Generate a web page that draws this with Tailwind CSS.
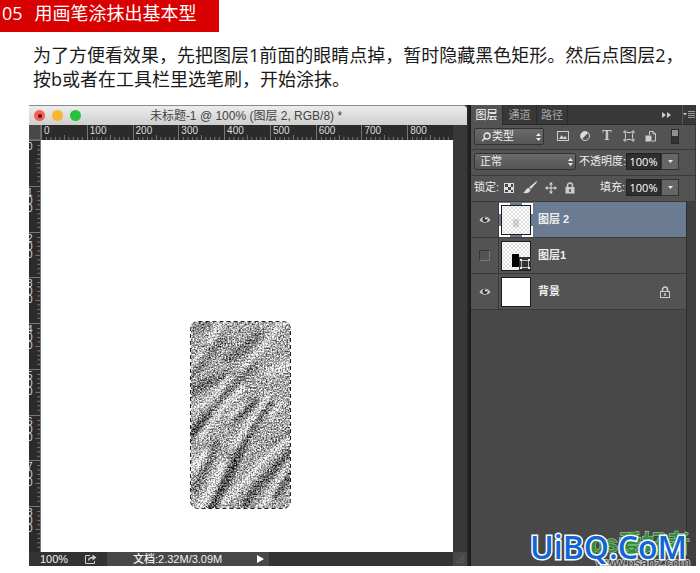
<!DOCTYPE html>
<html lang="zh-CN">

<head>
    <meta charset="UTF-8">
    <meta name="viewport" content="width=device-width, initial-scale=1.0">
    <title>用画笔涂抹出基本型</title>
    <script src="https://cdn.jsdelivr.net/npm/@tailwindcss/browser@4"></script>
</head>

<body class="bg-white text-black font-['Open_Sans','Noto_Sans_CJK_SC',sans-serif]">
    <header class="flex">
        <h1 class="flex gap-3 h-8 w-[219px] pl-[2px] bg-[#d80000] text-white text-[18px] leading-[26px] whitespace-nowrap">
            <span>05</span><span>用画笔涂抹出基本型</span>
        </h1>
    </header>

    <p class="pl-[33px] pt-[11px] text-[18px] leading-[24px] text-[#1a1a1a]">
        为了方便看效果，先把图层1前面的眼睛点掉，暂时隐藏黑色矩形。然后点图层2，<br>
        按b或者在工具栏里选笔刷，开始涂抹。
    </p>

    <main class="relative flex mt-[14px] ml-[29px] mr-1 bg-[#262626] font-['Liberation_Sans','Noto_Sans_CJK_SC',sans-serif]">
        <!-- document window -->
        <section class="flex-1 min-w-0 mr-[2px]">
            <div class="relative flex items-center h-5 rounded-tr-sm bg-linear-to-b from-[#ececec] to-[#cfcfcf] border-t border-[#8a8a8a]">
                <div class="absolute left-[5px] flex gap-[7px]">
                    <button aria-label="关闭" class="flex items-center justify-center size-[11px] rounded-full bg-[#f4605a]"><span class="size-1 rounded-full bg-[#6d0a08]"></span></button>
                    <button aria-label="最小化" class="size-[11px] rounded-full bg-[#f8b82e]"></button>
                    <button aria-label="缩放" class="size-[11px] rounded-full bg-[#25c43c]"></button>
                </div>
                <h2 class="w-full pr-1 text-center text-[12px] text-[#444]">未标题-1 @ 100% (图层 2, RGB/8) *</h2>
            </div>

            <div class="flex h-[15px] bg-[#2b2b2b]">
                <div class="w-3 bg-[#484848] border-r border-b border-[#666]"></div>
                <div id="rulerX" class="relative flex-1 grid grid-cols-9"></div>
                <div class="w-[14px] bg-[#383838]"></div>
            </div>

            <div class="flex h-[412px]">
                <div id="rulerY" class="w-3 grid grid-rows-9 overflow-hidden bg-[#2b2b2b]"></div>
                <div class="relative flex-1 bg-white">
                    <svg class="absolute left-[149px] top-[181px]" width="102" height="189" viewBox="0 0 102 189" fill="none">
                        <defs>
                            <clipPath id="card"><rect width="101" height="188" rx="8" /></clipPath>
                            <filter id="soft" x="-20%" y="-20%" width="140%" height="140%"><feGaussianBlur stdDeviation="6" /></filter>
                            <filter id="grain" x="0" y="0" width="100%" height="100%" color-interpolation-filters="sRGB">
                                <feTurbulence type="fractalNoise" baseFrequency="0.63" numOctaves="3" seed="11" />
                                <feColorMatrix values="1.6 0 0 0 -.3  1.6 0 0 0 -.3  1.6 0 0 0 -.3  0 0 0 0 1" />
                                <feComposite in="SourceGraphic" operator="arithmetic" k2=".85" k3=".9" k4="-.35" />
                            </filter>
                        </defs>
                        <g clip-path="url(#card)">
                            <g filter="url(#grain)">
                                <rect width="102" height="189" fill="#a8a8a8" />
                                <g transform="scale(.3333) translate(-31 -33)" filter="url(#soft)" stroke-linecap="round">
                                    <g stroke="#404040" stroke-width="20">
                                        <path d="M34 375 100 305" stroke-width="28" />
                                        <path d="M100 305 150 240 225 160" stroke="#666" />
                                        <path d="M92 600 135 520 185 410" stroke-width="28" />
                                        <path d="M185 410 225 345 275 280" stroke="#555" />
                                        <path d="M150 335 200 300 235 275" />
                                        <path d="M195 585 235 530 335 425" stroke="#555" stroke-width="26" />
                                        <path d="M290 555 335 480" />
                                        <path d="M150 145 190 120 235 75" stroke="#707070" stroke-width="30" />
                                        <path d="M40 190 75 150 130 85" stroke="#777" stroke-width="26" />
                                        <path d="M40 240 90 215 145 195" stroke="#666" stroke-width="28" />
                                        <path d="M45 540 75 480 110 400" stroke="#707070" stroke-width="26" />
                                        <path d="M45 60 85 42" stroke="#777" />
                                        <path d="M285 400 330 370" stroke="#666" />
                                    </g>
                                    <g stroke="#f4f4f4" stroke-width="12">
                                        <path d="M45 605 80 565 130 460" stroke-width="20" />
                                        <path d="M185 178 245 115 290 60" />
                                        <path d="M88 95 120 45" stroke-width="16" />
                                        <path d="M35 165 70 125" />
                                        <path d="M40 300 90 270 150 200" />
                                        <path d="M60 385 130 290 190 235" stroke-width="14" />
                                        <path d="M145 330 190 285" />
                                        <path d="M160 415 205 345 265 255" stroke-width="14" />
                                        <path d="M130 580 200 510 255 450 325 385" stroke-width="14" />
                                        <path d="M265 190 325 165" stroke-width="26" stroke="#e0e0e0" />
                                        <path d="M35 480 75 430" stroke-width="20" />
                                        <path d="M270 320 310 275" />
                                        <path d="M240 600 285 530 330 460" />
                                        <path d="M290 50 320 40" />
                                    </g>
                                </g>
                            </g>
                        </g>
                        <rect x=".5" y=".5" width="100" height="187" rx="8" stroke="#fff" />
                        <rect x=".5" y=".5" width="100" height="187" rx="8" stroke="#222" stroke-dasharray="4 3" />
                    </svg>
                </div>
                <div class="w-[14px] bg-[#383838]"></div>
            </div>

            <footer class="flex items-center h-[14px] bg-[#333] text-[11px] leading-[14px] text-[#f2f2f2]">
                <span class="w-[56px] pl-[11px]">100%</span>
                <svg class="w-3 h-[10px]" viewBox="0 0 12 10" fill="none" stroke="#d0d0d0"><path d="M5 1.500H.5v8h9V7" /><path d="M3.500 6.500C4 4 5.500 3.500 8 3.500" stroke-width="1.500" /><path d="M7.500.5 11.500 3.500 7.500 6.500z" fill="#d0d0d0" stroke="none" /></svg>
                <span class="ml-[10px] w-[150px] pl-[26px] bg-[#484848] font-medium">文档:2.32M/3.09M</span>
                <button aria-label="状态菜单" class="w-3 h-[14px] bg-[#484848]"><svg width="7" height="8" viewBox="0 0 7 8" fill="#fff"><path d="M0 0 7 4 0 8z" /></svg></button>
                <div class="flex-1"></div>
                <svg class="w-[14px] h-[14px] bg-[#484848]" viewBox="0 0 14 14" stroke="#777"><path d="M3 11 11 3M6 11 11 6M9 11 11 9" stroke-dasharray="1 1" /></svg>
            </footer>
        </section>

        <!-- layers panel -->
        <aside class="flex flex-col w-[227px] border-l-2 border-[#1c1c1c] bg-[#484848] text-[11px] text-[#eee]">
            <nav class="flex h-5 bg-[#383838] border-b border-[#2a2a2a] leading-[20px] text-[#a8a8a8]">
                <button class="w-[31px] h-5 bg-[#535353] text-white">图层</button>
                <button class="w-[34px] h-5 border-l border-[#2a2a2a]">通道</button>
                <button class="w-[32px] h-5 border-x border-[#2a2a2a]">路径</button>
                <div class="flex-1"></div>
                <button aria-label="折叠" class="w-[20px] h-5"><svg width="9" height="6" viewBox="0 0 9 6" fill="#ccc"><path d="M0 0 4 3 0 6zM5 0 9 3 5 6z" /></svg></button>
                <button aria-label="面板菜单" class="w-[14px] h-5 border-l border-[#555]"><svg width="12" height="8" viewBox="0 0 12 8"><path d="M0 2h4L2 4.500z" fill="#ccc" /><path d="M5 .5h7M5 2.500h7M5 4.500h7M5 6.500h7" stroke="#999" /></svg></button>
            </nav>

            <div class="flex items-center h-[25px] pl-[3px] pb-[2px] bg-[#535353] border-r border-b border-[#3a3a3a]">
                <div class="relative w-[70px]">
                    <select aria-label="类型" class="block w-full h-[17px] pl-[17px] appearance-none rounded-xs border border-[#333] bg-linear-to-b from-[#6a6a6a] to-[#555] text-[11px] leading-[15px]"><option>类型</option></select>
                    <svg class="absolute left-[7px] top-[4px] pointer-events-none" width="10" height="10" viewBox="0 0 10 10" fill="none" stroke="#eee" stroke-width="1.300"><circle cx="6" cy="4" r="3" /><path d="M4 6 1 9" /></svg>
                    <svg class="absolute right-[3px] top-[5px] pointer-events-none" width="5" height="8" viewBox="0 0 5 8" fill="#eee"><path d="M0 3 2.500 0 5 3zM0 5h5L2.500 8z" /></svg>
                </div>
                <div class="flex items-center gap-[10px] pl-[13px]">
                    <button aria-label="像素"><svg width="12" height="12" viewBox="0 0 12 12"><rect x=".5" y="1.500" width="11" height="9" fill="none" stroke="#ccc" /><path d="M2 9 4.500 5 6.500 7.500 8.500 6 10 9z" fill="#ccc" /></svg></button>
                    <button aria-label="调整"><svg width="12" height="12" viewBox="0 0 12 12"><circle cx="6" cy="6" r="4.500" fill="#ddd" /><path d="M2.800 9.200A4.500 4.500 0 0 0 9.200 2.800z" fill="#555" /><circle cx="6" cy="6" r="4.500" fill="none" stroke="#ccc" /></svg></button>
                    <button aria-label="文字" class="w-3 text-[14px] leading-[14px] font-bold text-[#ccc] font-['Liberation_Serif',serif]">T</button>
                    <button aria-label="形状"><svg width="12" height="12" viewBox="0 0 12 12" fill="none" stroke="#ccc"><path d="M2.500 4v4M9.500 4v4M4 2.500h4M4 9.500h4" /><path d="M1 1h2v2H1zM9 1h2v2H9zM1 9h2v2H1zM9 9h2v2H9z" /></svg></button>
                    <button aria-label="智能对象"><svg width="12" height="12" viewBox="0 0 12 12" fill="none" stroke="#ccc"><path d="M4.500 5V1.500H8L10.500 4v7H7" /><path d="M8 1v3h3" /><rect x="1" y="6" width="5" height="5" fill="#ccc" /></svg></button>
                    <button aria-label="过滤开关" class="flex flex-col w-2 h-[15px] ml-1 bg-[#333] border border-[#2a2a2a]"><span class="w-full h-[6px] bg-[#909090]"></span></button>
                </div>
            </div>

            <div class="flex items-center h-[26px] pl-[3px] pb-[2px] bg-[#535353] border-r border-b border-[#3a3a3a]">
                <div class="relative w-[102px]">
                    <select aria-label="混合模式" class="block w-full h-[17px] pl-[5px] appearance-none rounded-xs border border-[#333] bg-linear-to-b from-[#6a6a6a] to-[#555] text-[11px] leading-[15px]"><option>正常</option></select>
                    <svg class="absolute right-[3px] top-[5px] pointer-events-none" width="5" height="8" viewBox="0 0 5 8" fill="#eee"><path d="M0 3 2.500 0 5 3zM0 5h5L2.500 8z" /></svg>
                </div>
                <label for="opacity" class="w-[50px] pl-[3px] whitespace-nowrap">不透明度:</label>
                <input id="opacity" value="100%" class="w-[35px] h-[17px] text-center bg-[#2e2e2e] border border-[#222] text-white text-[11px] font-['Open_Sans']">
                <button aria-label="不透明度滑块" class="flex items-center justify-center w-[18px] h-[17px] bg-[#666] border border-[#333]"><svg width="5" height="3" viewBox="0 0 5 3" fill="#eee"><path d="M0 0h5L2.500 3z" /></svg></button>
            </div>

            <div class="flex items-center h-[26px] pl-[3px] pb-[2px] bg-[#535353] border-r border-b border-[#3a3a3a]">
                <span class="w-[29px] whitespace-nowrap">锁定:</span>
                <div class="flex items-center gap-2 w-[97px]">
                    <button aria-label="锁定透明像素"><svg width="12" height="12" viewBox="0 0 12 12"><rect x="1" y="1" width="10" height="10" fill="#ddd" /><path d="M2 2h3v3H2zM8 2h2v3H8zM5 5h3v3H5zM2 8h3v2H2zM8 8h2v2H8z" fill="#444" /></svg></button>
                    <button aria-label="锁定图像像素"><svg width="14" height="13" viewBox="0 0 14 13" fill="#ddd"><path d="M13.500 0 14 1 8 8 6 6.500zM5.500 7 7.500 8.800C7 12 3.500 12.500 0 12 2.500 11 2.500 7.500 5.500 7z" /></svg></button>
                    <button aria-label="锁定位置"><svg width="12" height="12" viewBox="0 0 12 12" fill="#ddd"><path d="M6 0 8 2.500H6.500v3h3V4L12 6 9.500 8V6.500h-3v3H8L6 12 4 9.500h1.500v-3h-3V8L0 6l2.500-2v1.500h3v-3H4z" /></svg></button>
                    <button aria-label="锁定全部"><svg width="10" height="12" viewBox="0 0 10 12"><path d="M2.500 6V3.500a2.500 2.500 0 0 1 5 0V6" fill="none" stroke="#ccc" stroke-width="1.500" /><rect x=".5" y="5" width="9" height="6.500" fill="#ccc" /><path d="M5 7v3" stroke="#444" stroke-width="1.500" /></svg></button>
                </div>
                <label for="fill" class="w-[26px] whitespace-nowrap">填充:</label>
                <input id="fill" value="100%" class="w-[35px] h-[17px] text-center bg-[#2e2e2e] border border-[#222] text-white text-[11px] font-['Open_Sans']">
                <button aria-label="填充滑块" class="flex items-center justify-center w-[18px] h-[17px] bg-[#666] border border-[#333]"><svg width="5" height="3" viewBox="0 0 5 3" fill="#eee"><path d="M0 0h5L2.500 3z" /></svg></button>
            </div>

            <div class="flex flex-1">
                <ul class="flex-1 font-bold">
                    <li class="flex h-9 bg-[#535353] border-b border-[#3a3a3a]">
                        <button aria-label="隐藏图层 2" class="flex items-center justify-center w-[28px] border-r border-[#3a3a3a]"><svg width="12" height="9" viewBox="0 0 12 9"><path d="M.5 5C3 .5 9 .5 11.500 5 9 8.500 3 8.500.5 5z" fill="#ccc" /><circle cx="6" cy="4.500" r="2.500" fill="#333" /><circle cx="7" cy="3.500" r="1" fill="#fff" /></svg></button>
                        <div class="flex flex-1 items-center bg-[#6b7b92]">
                            <svg width="34" height="34" viewBox="0 0 34 34">
                                <defs><pattern id="checker" width="4" height="4" patternUnits="userSpaceOnUse"><rect width="4" height="4" fill="#fff" /><path d="M0 0h2v2H0zM2 2h2v2H2z" fill="#ddd" /></pattern></defs>
                                <path d="M1 11V1h10M23 1h10v10M33 23v10H23M11 33H1V23" fill="none" stroke="#fff" stroke-width="2" />
                                <rect x="2.500" y="2.500" width="29" height="29" fill="url(#checker)" stroke="#1c1c1c" />
                                <rect x="14" y="16" width="6" height="8" fill="#888" opacity=".3" />
                            </svg>
                            <span class="pl-[5px]">图层 2</span>
                        </div>
                    </li>
                    <li class="flex h-9 bg-[#535353] border-b border-[#3a3a3a]">
                        <button aria-label="显示图层1" class="flex items-center justify-center w-[28px] border-r border-[#3a3a3a]"><span class="size-[11px] border border-t-[#333] border-l-[#333] border-[#777]"></span></button>
                        <div class="flex flex-1 items-center">
                            <svg width="34" height="34" viewBox="0 0 34 34">
                                <rect x="2.500" y="2.500" width="29" height="29" fill="url(#checker)" stroke="#1c1c1c" />
                                <path d="M13 15h7v13h-7z" fill="#000" /><path d="M20 18h12v13H20z" fill="#333" />
                                <path d="M22.500 21.500h7v7h-7z" fill="none" stroke="#bbb" /><path d="M21 20h2v2h-2zM29 20h2v2h-2zM21 28h2v2h-2zM29 28h2v2h-2z" fill="#eee" />
                            </svg>
                            <span class="pl-[5px]">图层1</span>
                        </div>
                    </li>
                    <li class="flex h-9 bg-[#535353] border-b border-[#3a3a3a]">
                        <button aria-label="隐藏背景" class="flex items-center justify-center w-[28px] border-r border-[#3a3a3a]"><svg width="12" height="9" viewBox="0 0 12 9"><path d="M.5 5C3 .5 9 .5 11.500 5 9 8.500 3 8.500.5 5z" fill="#ccc" /><circle cx="6" cy="4.500" r="2.500" fill="#333" /><circle cx="7" cy="3.500" r="1" fill="#fff" /></svg></button>
                        <div class="flex flex-1 items-center">
                            <svg width="34" height="34" viewBox="0 0 34 34"><rect x="2.500" y="2.500" width="29" height="29" fill="#fff" stroke="#1c1c1c" /></svg>
                            <span class="flex-1 pl-[5px]">背景</span>
                            <svg class="mr-4" width="10" height="12" viewBox="0 0 10 12" fill="none" stroke="#ccc"><path d="M2.500 5.500V3.500a2.500 2.500 0 0 1 5 0v2" stroke-width="1.500" /><rect x=".5" y="5.500" width="9" height="6" /><path d="M5 7v3" stroke-width="1.500" /></svg>
                        </div>
                    </li>
                </ul>
                <div class="w-[10px] bg-[#3f3f3f] border-l border-[#2e2e2e]"></div>
            </div>
        </aside>

        <!-- site watermark -->
        <div class="absolute right-[6px] bottom-0 w-[160px] h-9 whitespace-nowrap">
            <div class="absolute right-0 top-0 text-[24px] leading-[28px] font-bold text-[#2f8f3a] [-webkit-text-stroke:1px_#b8dcb8] [paint-order:stroke_fill]">ps爱好者</div>
            <div class="absolute right-0 -bottom-1 text-[13px] leading-[14px] text-[#333] [-webkit-text-stroke:2px_#bbb] [paint-order:stroke_fill]">www.psahz.com</div>
            <div class="absolute left-0 top-0 text-[32px] leading-[34px] text-[#1166d8] font-semibold font-['Open_Sans',sans-serif] [-webkit-text-stroke:3px_white] [paint-order:stroke_fill]">UiBQ.CoM</div>
        </div>
    </main>

    <script>
        const rulerX = document.getElementById('rulerX');
        const rulerY = document.getElementById('rulerY');

        for (let i = 0; i < 9; i++) {
            let ticksX = '';
            let ticksY = '';
            for (let t = 10; t < 100; t += 10) {
                const len = t === 50 ? 5 : 3;
                ticksX += `M${t} ${15 - len}V15`;
                ticksY += `M${12 - len} ${t}H12`;
            }
            rulerX.innerHTML += `<div class="relative border-l border-[#777]">
                <svg class="absolute inset-0 w-full h-full" viewBox="0 0 100 15" preserveAspectRatio="none" stroke="#777"><path d="${ticksX}" vector-effect="non-scaling-stroke"/></svg>
                <span class="relative block pl-[2px] text-[10px] leading-[12px] text-[#ddd]">${i * 100}</span></div>`;
            const digits = String(i * 100).split('').map(d => `<span class="block">${d}</span>`).join('');
            rulerY.innerHTML += `<div class="relative min-h-0 border-t border-r border-[#777]">
                <svg class="absolute inset-0 w-full h-full" viewBox="0 0 12 100" preserveAspectRatio="none" stroke="#777"><path d="${ticksY}" vector-effect="non-scaling-stroke"/></svg>
                <div class="relative -ml-[2px] pt-[2px] text-[10px] leading-[8px] text-[#ddd]">${digits}</div></div>`;
        }
    </script>
</body>

</html>
